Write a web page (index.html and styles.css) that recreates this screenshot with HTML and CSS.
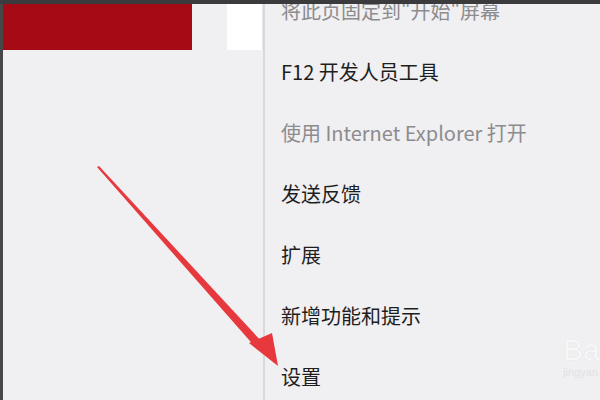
FILE: index.html
```html
<!DOCTYPE html>
<html lang="zh-CN">
<head>
  <meta charset="UTF-8">
  <meta name="viewport" content="width=device-width, initial-scale=1.0">
  <title>Edge 菜单</title>
  <link rel="stylesheet" href="styles.css">
</head>
<body>
  <div class="topbar"></div>

  <div class="window">
    <div class="page">
      <div class="tabs">
        <div class="tab-red"></div>
        <div class="tab-white"></div>
      </div>
    </div>

    <div class="menu">
      <ul class="menu-list">
        <li class="item disabled">将此页固定到"开始"屏幕</li>
        <li class="item">F12 开发人员工具</li>
        <li class="item disabled">使用 Internet Explorer 打开</li>
        <li class="item">发送反馈</li>
        <li class="item">扩展</li>
        <li class="item">新增功能和提示</li>
        <li class="item">设置</li>
      </ul>
    </div>

    <div class="watermark">Bai<span>jingyan</span></div>

    <!-- red pointer arrow drawn over the page -->
    <svg class="arrow" width="600" height="400" viewBox="0 0 600 400">
      <defs>
        <filter id="soft" x="-10%" y="-10%" width="120%" height="120%">
          <feGaussianBlur stdDeviation="0.6"/>
        </filter>
      </defs>
      <g filter="url(#soft)" fill="#e6383e">
        <polygon points="97,167 99,166 263,343 257,349"/>
        <polygon points="249,343 272,333 278,366"/>
      </g>
    </svg>
  </div>
</body>
</html>
```

FILE: styles.css
```css
/* page frame */
body {
  margin: 0;
  padding: 0;
  width: 600px;
  height: 400px;
  overflow: hidden;
  background-color: #f0eff2;
  font-family: "Noto Sans CJK SC", "Microsoft YaHei", sans-serif;
}

.topbar {
  height: 4px;
  background-color: #3b3b3d;
}

.window {
  position: relative;
  display: flex;
  height: 396px;
  overflow: hidden;
  border-left: 3px solid #47474a;
}

.page {
  width: 260px;
  flex-shrink: 0;
  border-right: 2px solid #d9d8dc;
}

.tabs {
  display: flex;
  align-items: flex-start;
}

.tab-red {
  width: 189px;
  height: 46px;
  background-color: #a40b15;
}

.tab-white {
  width: 35px;
  height: 46px;
  margin-left: 35px;
  background-color: #ffffff;
  border-right: 1px solid #e6e5e9;
}

/* context menu */
.menu {
  flex: 1;
  background-color: #f0eff2;
}

.menu-list {
  list-style: none;
  margin: -24px 0 0 0;
  padding: 0 0 0 16px;
}

.item {
  height: 61px;
  line-height: 61px;
  font-size: 20px;
  color: #1e1e1e;
  white-space: nowrap;
}

.item.disabled {
  color: #8c8c8e;
}

.watermark {
  position: absolute;
  left: 560px;
  top: 330px;
  font-family: "Liberation Sans", sans-serif;
  font-size: 30px;
  line-height: 32px;
  color: #f7f7f8;
  text-shadow: 0 0 1px #d8d8db;
}

.watermark span {
  display: block;
  font-size: 11px;
  line-height: 12px;
  color: #e2e2e4;
  text-shadow: none;
}

.arrow {
  position: absolute;
  left: -3px;
  top: -4px;
  pointer-events: none;
}
```
